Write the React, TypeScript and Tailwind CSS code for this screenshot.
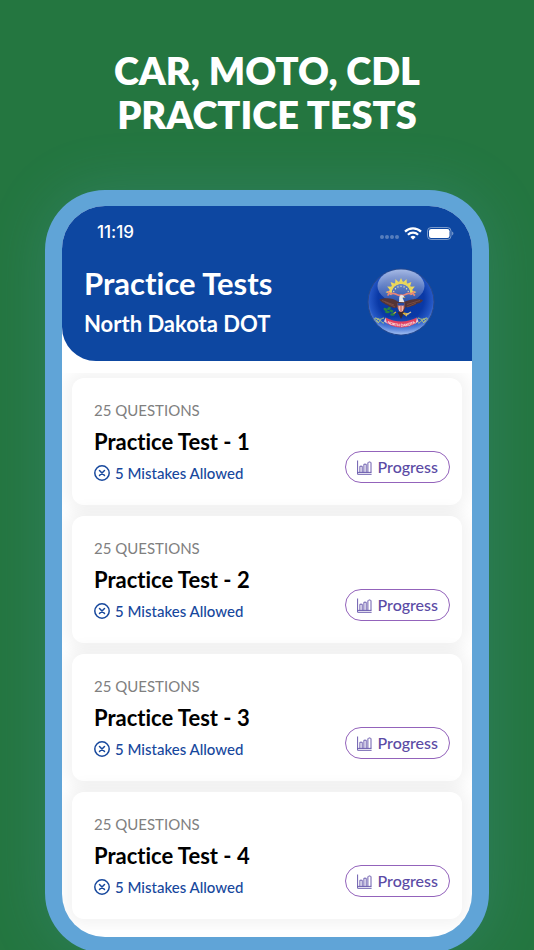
const tests = [
  { id: 1, questions: 25, mistakes: 5 },
  { id: 2, questions: 25, mistakes: 5 },
  { id: 3, questions: 25, mistakes: 5 },
  { id: 4, questions: 25, mistakes: 5 },
]

const rays = [-84, -63, -42, -21, 0, 21, 42, 63, 84]
const stars = [-70, -46, -23, 0, 23, 46, 70]

function WifiIcon() {
  return (
    <svg viewBox="0 0 18 13" className="w-[18px] h-[13px]" fill="none" stroke="#fff" strokeWidth="2.2" aria-hidden="true">
      <path d="M1 4.6A11.4 11.4 0 0 1 17 4.6" />
      <path d="M3.9 7.7a7.3 7.3 0 0 1 10.2 0" />
      <path d="M9 12.8 6.4 10.1a3.7 3.7 0 0 1 5.2 0Z" fill="#fff" stroke="none" />
    </svg>
  )
}

function BatteryIcon() {
  return (
    <svg viewBox="0 0 27 13" className="w-[27px] h-[13px]" aria-hidden="true">
      <rect x="0.5" y="0.5" width="23.5" height="12" rx="3.6" fill="none" stroke="#fff" strokeOpacity="0.45" />
      <rect x="2" y="2" width="20.5" height="9" rx="2.2" fill="#fff" />
      <path d="M25.2 4.6c1.6.6 1.6 3.2 0 3.8Z" fill="#fff" fillOpacity="0.5" />
    </svg>
  )
}

function CircleXIcon() {
  return (
    <svg viewBox="0 0 16 16" className="w-4 h-4" fill="none" stroke="currentColor" strokeWidth="1.5" strokeLinecap="round" aria-hidden="true">
      <circle cx="8" cy="8" r="7.2" />
      <path d="m5.5 5.5 5 5m0-5-5 5" />
    </svg>
  )
}

function ChartIcon() {
  return (
    <svg viewBox="0 0 15 15" className="w-[15px] h-[15px]" fill="none" stroke="currentColor" strokeWidth="0.9" strokeLinejoin="round" aria-hidden="true">
      <path d="M.6.5v13.8h14M.6 12.4h13.9" />
      <path d="M2.9 12.4V6.2h2.3v6.2M6.900 12.400V4.200h2.300v8.200M10.900 12.400V2.800L11.700 2h1.700l.6.800v9.600" />
    </svg>
  )
}

function StateSeal() {
  return (
    <svg viewBox="0 0 68 68" className="w-[68px] h-[68px]" role="img" aria-label="North Dakota">
      <defs>
        <radialGradient id="ball" cx="50%" cy="45%" r="56%">
          <stop offset="0" stopColor="#0837a0" />
          <stop offset="0.62" stopColor="#0a39a6" />
          <stop offset="0.86" stopColor="#2558c6" />
          <stop offset="1" stopColor="#6f97da" />
        </radialGradient>
        <linearGradient id="shine" x1="0" y1="0" x2="0" y2="1">
          <stop offset="0" stopColor="#fff" stopOpacity="0.6" />
          <stop offset="1" stopColor="#fff" stopOpacity="0.12" />
        </linearGradient>
        <linearGradient id="glow" x1="0" y1="0" x2="0" y2="1">
          <stop offset="0.72" stopColor="#4d83e8" stopOpacity="0" />
          <stop offset="1" stopColor="#b4cdf8" stopOpacity="0.75" />
        </linearGradient>
        <path id="motto" d="M19 54.8Q34 62.2 49.5 54.8" />
      </defs>
      <circle cx="34" cy="34" r="33" fill="url(#ball)" stroke="#28498c" strokeWidth="1" />
      <circle cx="34" cy="34" r="32.5" fill="url(#glow)" />
      <ellipse cx="34" cy="18" rx="23.5" ry="16.5" fill="url(#shine)" />
      {/* sun rays and stars */}
      {rays.map((angle) => (
        <path key={angle} d="M31.2 16 34 10 36.8 16Z" fill="#f0dc5a" transform={`rotate(${angle} 34 25.5)`} />
      ))}
      <path d="M23.5 25a10.5 10.5 0 0 1 21 0" fill="none" stroke="#e9d65c" strokeWidth="2" />
      {stars.map((angle) => (
        <circle key={angle} cx="34" cy="18.3" r="0.7" fill="#e8e4b4" transform={`rotate(${angle} 34 26)`} />
      ))}
      {/* ribbon */}
      <path d="M20.5 23.5 24 26c4-2.6 6 3 10 1 4 2 6-3.6 10-1l3.5-2.5M22 26l-1.5 1.5M46 26l2 1.5" fill="none" stroke="#e98578" strokeWidth="1.7" />
      {/* eagle */}
      <path d="M31.5 34C25 29 18 30 12.5 31.5c2 3.5 5 3.5 6 5 3 .5 3 2.5 6 2.5 2 1.5 4 1 6 0l2 5h4l2-5c4 .8 5-.8 7-1 3-.5 3-2 5-2.5 2-.5 4-.5 5.5-3.5-6-2-11-1-19.5 2Z" fill="#553436" />
      <path d="m15 32.5 12 4.5M18 34l10 5M53 32.5 40 36.5M49 35l-9 4" stroke="#805248" strokeWidth="0.8" />
      <path d="M32 34c.6-2.5-.5-4 1-6.5 2.5-1.5 4 .5 4.5 1.8l-2 .5 2 4.5Z" fill="#e9e8e5" />
      <path d="m36.8 28.7 1.8.8-2 .5Z" fill="#e9bb32" />
      <path d="M30.7 35h6.6v5q-1 3.5-3.3 4.5-2.3-1-3.3-4.5Z" fill="#d9847c" />
      <path d="M30.7 35h6.6v2.5h-6.6Z" fill="#29499f" />
      <path d="M32.5 38v5M35.5 38v5" stroke="#f4ded8" strokeWidth="0.6" />
      <path d="m30.5 44 3.5 7 3.5-7Z" fill="#3c2930" />
      <path d="m29 44-3 2m11-1 5 1m-6-1 4 3" stroke="#e0b33a" strokeWidth="1.2" />
      <path d="M39 47l5-3" stroke="#d4c49a" strokeWidth="1.3" />
      <g fill="#278244">
        <ellipse cx="18.5" cy="41.5" rx="2.2" ry="1.3" transform="rotate(30 18.5 41.5)" />
        <ellipse cx="22" cy="40.5" rx="2" ry="1.3" transform="rotate(-30 22 40.5)" />
        <ellipse cx="20.5" cy="44" rx="2.4" ry="1.3" />
        <ellipse cx="24.5" cy="43" rx="2" ry="1.3" transform="rotate(30 24.5 43)" />
        <ellipse cx="25.5" cy="46.5" rx="2.3" ry="1.2" />
      </g>
      {/* scroll work and motto banner */}
      <path d="M17 55c-4 0-3-5-6-4-2 1-1 4 1 3s-1-4-4-4c-1 2 2 3 4 5m5-5c-2 0-3 2-4 1M51 55c4 0 3-5 6-4 2 1 1 4-1 3s1-4 4-4c1 2-2 3-4 5m-5-5c2 0 3 2 4 1" fill="none" stroke="#bdca79" strokeWidth="1" />
      <path d="M18.5 49.5Q34 57.5 50 49.5l-1.5 6Q34 63.5 20 55.5Z" fill="#e2405f" />
      <path d="m18.5 49.5-1.5 4 3 2Zm31.5 0 1.5 4-3 2Z" fill="#f3c8cc" />
      <text fill="#fff" fontSize="3.7" fontWeight="700" fontFamily="Lato, sans-serif">
        <textPath href="#motto" startOffset="50%" textAnchor="middle">NORTH DAKOTA</textPath>
      </text>
    </svg>
  )
}

function TestCard({ id, questions, mistakes }: { id: number; questions: number; mistakes: number }) {
  return (
    <li className="flex items-end justify-between rounded-xl bg-white pt-5 pb-5 pl-[22px] pr-3 shadow-[0_0_16px_6px_rgba(0,0,0,0.05)]">
      <div>
        <p className="text-[15px] leading-6 text-[#808080]">{questions} QUESTIONS</p>
        <h2 className="text-[22px] leading-8 pt-1 font-bold text-black">Practice Test - {id}</h2>
        <p className="flex items-center gap-[5px] pt-[3px] text-[15px] leading-6 font-medium text-[#17489d]">
          <CircleXIcon />
          {mistakes} Mistakes Allowed
        </p>
      </div>
      <button type="button" className="mb-0.5 flex h-8 items-center gap-[6px] rounded-full border border-[#9363bb] px-[11px] text-[16px] font-medium text-[#5b4ba5]">
        <ChartIcon />
        Progress
      </button>
    </li>
  )
}

export default function App() {
  return (
    <main className="min-h-screen overflow-hidden bg-[#247640] font-[Lato,sans-serif] [font-variant-ligatures:none]">
      <h1 className="pt-12 text-center text-[38px] leading-11 font-extrabold text-white">
        CAR, MOTO, CDL
        <br />
        PRACTICE TESTS
      </h1>

      <section className="mx-[45px] mt-[54px] -mb-1 rounded-[60px] border-x-[17px] border-y-[16px] border-[#60a4d7] bg-[#60a4d7] shadow-[0_0_60px_rgba(96,164,215,0.2)]">
        <div className="overflow-hidden rounded-[43px] bg-white pb-[7px]">
          <header className="rounded-bl-[34px] bg-[#0d47a1] pt-[15px] pb-[21px] text-white">
            <div className="flex h-6 items-center justify-between pl-[35px] pr-[18px]">
              <time className="font-[Inter,sans-serif] text-[17px] font-medium">11:19</time>
              <div className="flex items-center gap-[5px]">
                <div className="flex gap-px pt-2">
                  <span className="size-1 rounded-full bg-white/30" />
                  <span className="size-1 rounded-full bg-white/30" />
                  <span className="size-1 rounded-full bg-white/30" />
                  <span className="size-1 rounded-full bg-white/30" />
                </div>
                <WifiIcon />
                <BatteryIcon />
              </div>
            </div>
            <div className="flex items-center justify-between pt-[18px] pl-[22px] pr-[37px]">
              <div>
                <p className="text-[31px] leading-10 font-bold">Practice Tests</p>
                <p className="pt-[5px] text-[22px] leading-8 font-bold">North Dakota DOT</p>
              </div>
              <StateSeal />
            </div>
          </header>

          <ul className="mt-3 flex flex-col gap-[11px] overflow-hidden px-[10px] pt-[5px] pb-[11px]">
            {tests.map((test) => (
              <TestCard key={test.id} {...test} />
            ))}
          </ul>
        </div>
      </section>
    </main>
  )
}
